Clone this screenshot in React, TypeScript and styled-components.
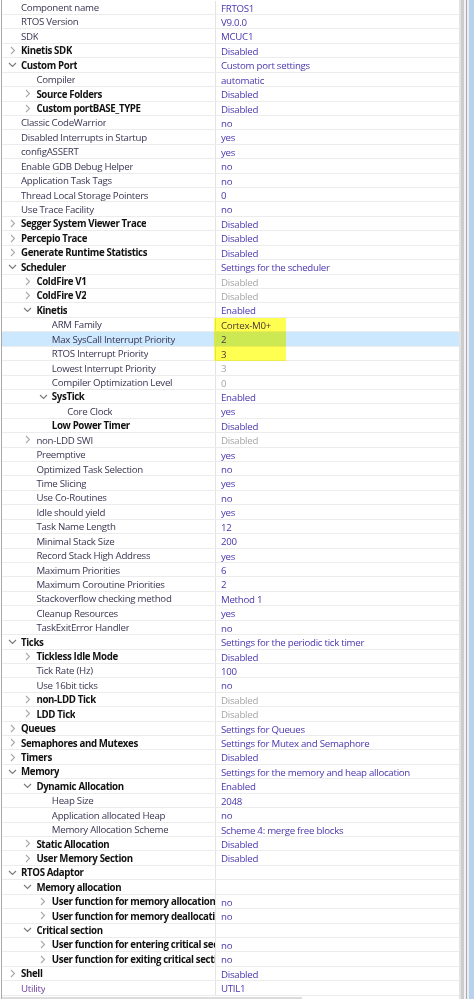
import React from 'react'
import styled, { createGlobalStyle } from 'styled-components'

const ROW_H = 14.437

const GlobalStyle = createGlobalStyle`
  html, body {
    margin: 0;
    padding: 0;
    background: #ffffff;
  }
  body {
    font-family: "Open Sans", "Noto Sans", "Liberation Sans", sans-serif;
    font-size: 9.7px;
    letter-spacing: -0.27px;
  }
`

interface Prop {
  lvl: number
  name: string
  value?: string
  exp?: 'open' | 'closed'
  bold?: boolean
  off?: boolean
  sel?: boolean
  purple?: boolean
}

const props: Prop[] = [
  { lvl: 0, name: 'Component name', value: 'FRTOS1' },
  { lvl: 0, name: 'RTOS Version', value: 'V9.0.0' },
  { lvl: 0, name: 'SDK', value: 'MCUC1' },
  { lvl: 0, name: 'Kinetis SDK', value: 'Disabled', exp: 'closed', bold: true },
  { lvl: 0, name: 'Custom Port', value: 'Custom port settings', exp: 'open', bold: true },
  { lvl: 1, name: 'Compiler', value: 'automatic' },
  { lvl: 1, name: 'Source Folders', value: 'Disabled', exp: 'closed', bold: true },
  { lvl: 1, name: 'Custom portBASE_TYPE', value: 'Disabled', exp: 'closed', bold: true },
  { lvl: 0, name: 'Classic CodeWarrior', value: 'no' },
  { lvl: 0, name: 'Disabled Interrupts in Startup', value: 'yes' },
  { lvl: 0, name: 'configASSERT', value: 'yes' },
  { lvl: 0, name: 'Enable GDB Debug Helper', value: 'no' },
  { lvl: 0, name: 'Application Task Tags', value: 'no' },
  { lvl: 0, name: 'Thread Local Storage Pointers', value: '0' },
  { lvl: 0, name: 'Use Trace Facility', value: 'no' },
  { lvl: 0, name: 'Segger System Viewer Trace', value: 'Disabled', exp: 'closed', bold: true },
  { lvl: 0, name: 'Percepio Trace', value: 'Disabled', exp: 'closed', bold: true },
  { lvl: 0, name: 'Generate Runtime Statistics', value: 'Disabled', exp: 'closed', bold: true },
  { lvl: 0, name: 'Scheduler', value: 'Settings for the scheduler', exp: 'open', bold: true },
  { lvl: 1, name: 'ColdFire V1', value: 'Disabled', exp: 'closed', bold: true, off: true },
  { lvl: 1, name: 'ColdFire V2', value: 'Disabled', exp: 'closed', bold: true, off: true },
  { lvl: 1, name: 'Kinetis', value: 'Enabled', exp: 'open', bold: true },
  { lvl: 2, name: 'ARM Family', value: 'Cortex-M0+' },
  { lvl: 2, name: 'Max SysCall Interrupt Priority', value: '2', sel: true },
  { lvl: 2, name: 'RTOS Interrupt Priority', value: '3' },
  { lvl: 2, name: 'Lowest Interrupt Priority', value: '3', off: true },
  { lvl: 2, name: 'Compiler Optimization Level', value: '0', off: true },
  { lvl: 2, name: 'SysTick', value: 'Enabled', exp: 'open', bold: true },
  { lvl: 3, name: 'Core Clock', value: 'yes' },
  { lvl: 2, name: 'Low Power Timer', value: 'Disabled', bold: true },
  { lvl: 1, name: 'non-LDD SWI', value: 'Disabled', exp: 'closed', off: true },
  { lvl: 1, name: 'Preemptive', value: 'yes' },
  { lvl: 1, name: 'Optimized Task Selection', value: 'no' },
  { lvl: 1, name: 'Time Slicing', value: 'yes' },
  { lvl: 1, name: 'Use Co-Routines', value: 'no' },
  { lvl: 1, name: 'Idle should yield', value: 'yes' },
  { lvl: 1, name: 'Task Name Length', value: '12' },
  { lvl: 1, name: 'Minimal Stack Size', value: '200' },
  { lvl: 1, name: 'Record Stack High Address', value: 'yes' },
  { lvl: 1, name: 'Maximum Priorities', value: '6' },
  { lvl: 1, name: 'Maximum Coroutine Priorities', value: '2' },
  { lvl: 1, name: 'Stackoverflow checking method', value: 'Method 1' },
  { lvl: 1, name: 'Cleanup Resources', value: 'yes' },
  { lvl: 1, name: 'TaskExitError Handler', value: 'no' },
  { lvl: 0, name: 'Ticks', value: 'Settings for the periodic tick timer', exp: 'open', bold: true },
  { lvl: 1, name: 'Tickless Idle Mode', value: 'Disabled', exp: 'closed', bold: true },
  { lvl: 1, name: 'Tick Rate (Hz)', value: '100' },
  { lvl: 1, name: 'Use 16bit ticks', value: 'no' },
  { lvl: 1, name: 'non-LDD Tick', value: 'Disabled', exp: 'closed', bold: true, off: true },
  { lvl: 1, name: 'LDD Tick', value: 'Disabled', exp: 'closed', bold: true, off: true },
  { lvl: 0, name: 'Queues', value: 'Settings for Queues', exp: 'closed', bold: true },
  { lvl: 0, name: 'Semaphores and Mutexes', value: 'Settings for Mutex and Semaphore', exp: 'closed', bold: true },
  { lvl: 0, name: 'Timers', value: 'Disabled', exp: 'closed', bold: true },
  { lvl: 0, name: 'Memory', value: 'Settings for the memory and heap allocation', exp: 'open', bold: true },
  { lvl: 1, name: 'Dynamic Allocation', value: 'Enabled', exp: 'open', bold: true },
  { lvl: 2, name: 'Heap Size', value: '2048' },
  { lvl: 2, name: 'Application allocated Heap', value: 'no' },
  { lvl: 2, name: 'Memory Allocation Scheme', value: 'Scheme 4: merge free blocks' },
  { lvl: 1, name: 'Static Allocation', value: 'Disabled', exp: 'closed', bold: true },
  { lvl: 1, name: 'User Memory Section', value: 'Disabled', exp: 'closed', bold: true },
  { lvl: 0, name: 'RTOS Adaptor', exp: 'open', bold: true },
  { lvl: 1, name: 'Memory allocation', exp: 'open', bold: true },
  { lvl: 2, name: 'User function for memory allocation', value: 'no', exp: 'closed', bold: true },
  { lvl: 2, name: 'User function for memory deallocation', value: 'no', exp: 'closed', bold: true },
  { lvl: 1, name: 'Critical section', exp: 'open', bold: true },
  { lvl: 2, name: 'User function for entering critical section', value: 'no', exp: 'closed', bold: true },
  { lvl: 2, name: 'User function for exiting critical section', value: 'no', exp: 'closed', bold: true },
  { lvl: 0, name: 'Shell', value: 'Disabled', exp: 'closed', bold: true },
  { lvl: 0, name: 'Utility', value: 'UTIL1', purple: true },
]

const Frame = styled.div`
  display: flex;
  width: 474px;
  height: 999px;
  overflow: hidden;
`

const Table = styled.div`
  position: relative;
  flex: 1;
  display: flex;
  flex-direction: column;
  border-left: 1px solid #a9a9a9;
  padding-top: 0.56px;
  margin-left: 1px;
`

const Row = styled.div<{ sel?: boolean }>`
  display: grid;
  grid-template-columns: 213px 1fr;
  height: ${ROW_H}px;
  flex: none;
  box-sizing: border-box;
  border-bottom: 1px solid #ececec;
  background: ${p => (p.sel ? '#cce8ff' : 'transparent')};
  line-height: ${ROW_H - 1}px;
`

const NameCell = styled.div<{ lvl: number }>`
  display: flex;
  align-items: center;
  padding-left: ${p => 2 + p.lvl * 15.4}px;
  overflow: hidden;
  white-space: nowrap;
`

const Twisty = styled.span`
  flex: none;
  width: 17px;
  height: 100%;
  display: flex;
  align-items: center;
  justify-content: center;
`

const Label = styled.span<{ bold?: boolean; purple?: boolean }>`
  padding-top: 1px;
  color: ${p => (p.bold ? '#111111' : p.purple ? '#6b3f9f' : '#3b3552')};
  font-weight: ${p => (p.bold ? 700 : 400)};
  letter-spacing: ${p => (p.bold ? '-0.36px' : '-0.27px')};
  overflow: hidden;
  white-space: nowrap;
`

const ValueCell = styled.div<{ off?: boolean }>`
  border-left: 1px solid #e4e4e4;
  padding: 1px 0 0 5px;
  color: ${p => (p.off ? '#a6a6a6' : '#4b35ae')};
  overflow: hidden;
  white-space: nowrap;
`

const Marker = styled.div<{ top: number; rows: number }>`
  position: absolute;
  left: 212px;
  width: 72px;
  top: ${p => p.top}px;
  height: ${p => p.rows * ROW_H}px;
  background: #ffff52;
  mix-blend-mode: multiply;
  pointer-events: none;
`

const VScroll = styled.div`
  flex: none;
  width: 15px;
  height: 100%;
  background: linear-gradient(
    to right,
    #e3e3e3 0px,
    #e3e3e3 2px,
    #cdcdcd 2px,
    #cdcdcd 5px,
    #f2f2f2 5px,
    #f2f2f2 7px,
    #a9a9a9 7px,
    #a9a9a9 8px,
    #e9eef5 8px,
    #e9eef5 10px,
    #b9d1ea 10px,
    #b9d1ea 15px
  );
`

const HScroll = styled.div`
  position: absolute;
  left: 0;
  bottom: 0;
  width: 300px;
  height: 2px;
  background: #dcdcdc;
`

function Chevron({ open }: { open: boolean }) {
  return open ? (
    <svg width="9" height="6" viewBox="0 0 9 6">
      <polyline points="1,1 4.5,4.5 8,1" fill="none" stroke="#7a7a7a" strokeWidth="1.1" />
    </svg>
  ) : (
    <svg width="6" height="9" viewBox="0 0 6 9">
      <polyline points="1,1 4.5,4.5 1,8" fill="none" stroke="#a8a8a8" strokeWidth="1.1" />
    </svg>
  )
}

export default function App() {
  return (
    <>
      <GlobalStyle />
      <Frame>
        <Table>
          {props.map((p, i) => (
            <Row key={i} sel={p.sel}>
              <NameCell lvl={p.lvl}>
                <Twisty>{p.exp && <Chevron open={p.exp === 'open'} />}</Twisty>
                <Label bold={p.bold} purple={p.purple}>{p.name}</Label>
              </NameCell>
              <ValueCell off={p.off}>{p.value}</ValueCell>
            </Row>
          ))}
          <Marker top={0.56 + 22 * ROW_H} rows={3} />
          <HScroll />
        </Table>
        <VScroll />
      </Frame>
    </>
  )
}
